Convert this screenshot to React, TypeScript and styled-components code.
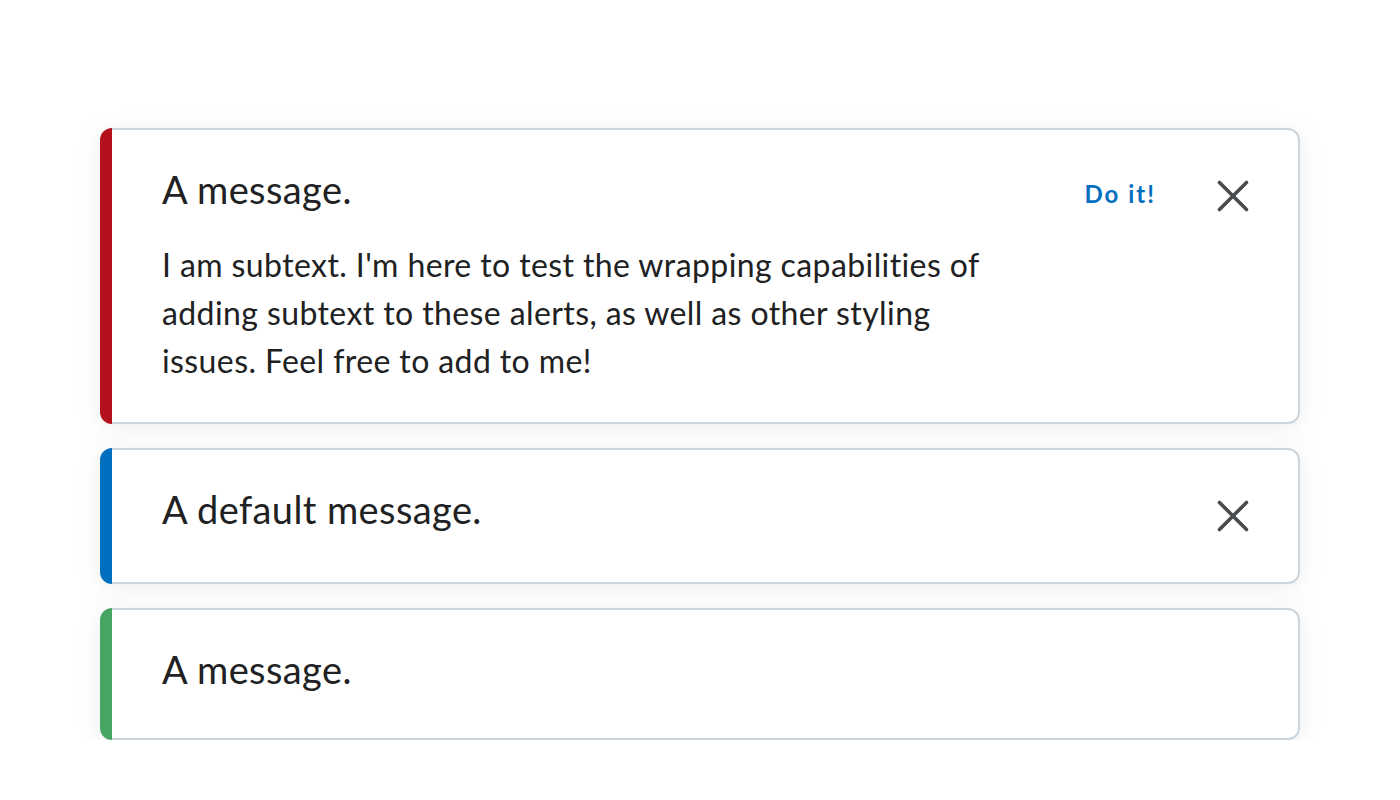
import React from 'react'
import styled, { createGlobalStyle } from 'styled-components'

const GlobalStyle = createGlobalStyle`
  html, body {
    margin: 0;
    padding: 0;
    background: #ffffff;
  }
  body {
    font-family: Lato, "Open Sans", sans-serif;
    font-variant-ligatures: none;
    color: #202122;
  }
`

const Page = styled.div`
  display: flex;
  flex-direction: column;
  gap: 24px;
  padding: 128px 100px 0 100px;
  width: 1200px;
`

const Alert = styled.div`
  display: flex;
  border-radius: 12px;
  background: #ffffff;
  box-shadow: 0 4px 24px rgba(86, 90, 92, 0.1);
`

const Bar = styled.div<{ $color: string }>`
  flex: none;
  width: 12px;
  background: ${p => p.$color};
  border-radius: 12px 0 0 12px;
`

const Body = styled.div`
  flex: 1;
  display: flex;
  align-items: flex-start;
  border: 2px solid #cdd5dc;
  border-left: none;
  border-radius: 0 12px 12px 0;
`

const TextArea = styled.div<{ $hasSub: boolean }>`
  flex: 1;
  padding: 31px 50px ${p => (p.$hasSub ? '37px' : '41px')} 50px;
`

const Title = styled.div`
  font-size: 38px;
  line-height: 56px;
  letter-spacing: 0.4px;
  color: #202122;
`

const Subtext = styled.div`
  margin-top: 24px;
  font-size: 32px;
  line-height: 48px;
  letter-spacing: 0.4px;
  color: #202122;
`

const ActionButton = styled.button`
  flex: none;
  margin: 27px 21px 0 0;
  height: 72px;
  padding: 0 20px;
  border: none;
  background: transparent;
  font-family: Lato, sans-serif;
  font-weight: 700;
  font-size: 24px;
  letter-spacing: 2px;
  color: #006fbf;
  cursor: pointer;
`

const CloseButton = styled.button`
  flex: none;
  display: flex;
  align-items: center;
  justify-content: center;
  width: 72px;
  height: 72px;
  margin: 30px 29px 30px 0;
  padding: 0;
  border: none;
  border-radius: 8px;
  background: transparent;
  color: #494c4e;
  cursor: pointer;
`

const CloseIcon = () => (
  <svg width="32" height="32" viewBox="0 0 32 32" fill="none">
    <path d="M2.5 2.5 L29.5 29.5 M29.5 2.5 L2.5 29.5" stroke="currentColor" strokeWidth="3.6" strokeLinecap="round" />
  </svg>
)

type AlertProps = {
  color: string
  title: string
  subtext?: string
  action?: string
  closable?: boolean
}

const AlertBox = ({ color, title, subtext, action, closable }: AlertProps) => (
  <Alert role="alert">
    <Bar $color={color} />
    <Body>
      <TextArea $hasSub={!!subtext}>
        <Title>{title}</Title>
        {subtext && <Subtext>{subtext}</Subtext>}
      </TextArea>
      {action && <ActionButton>{action}</ActionButton>}
      {closable && (
        <CloseButton aria-label="Close Alert">
          <CloseIcon />
        </CloseButton>
      )}
    </Body>
  </Alert>
)

const App = () => (
  <>
    <GlobalStyle />
    <Page>
      <AlertBox
        color="#b3111b"
        title="A message."
        subtext="I am subtext. I'm here to test the wrapping capabilities of adding subtext to these alerts, as well as other styling issues. Feel free to add to me!"
        action="Do it!"
        closable
      />
      <AlertBox color="#006fbf" title="A default message." closable />
      <AlertBox color="#46a661" title="A message." />
    </Page>
  </>
)

export default App
